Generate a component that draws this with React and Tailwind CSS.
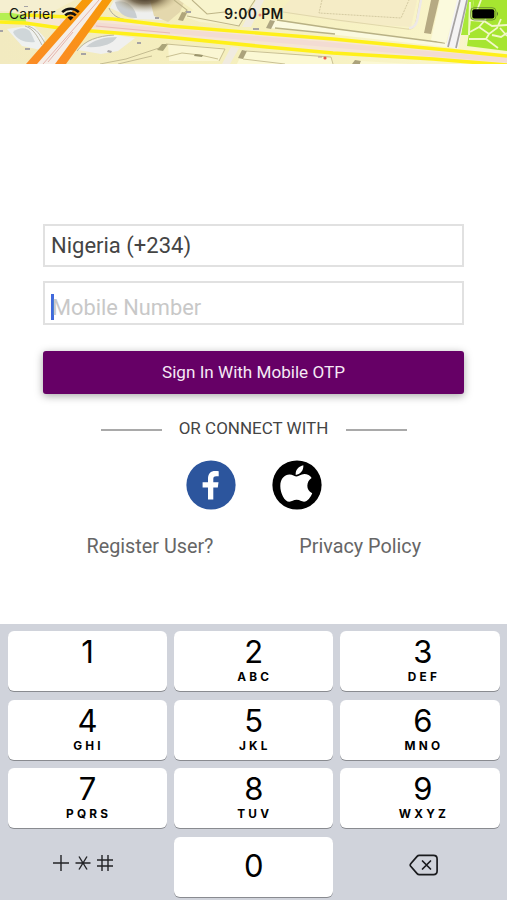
import React from "react";

const keys = [
  { num: "1", letters: "" },
  { num: "2", letters: "ABC" },
  { num: "3", letters: "DEF" },
  { num: "4", letters: "GHI" },
  { num: "5", letters: "JKL" },
  { num: "6", letters: "MNO" },
  { num: "7", letters: "PQRS" },
  { num: "8", letters: "TUV" },
  { num: "9", letters: "WXYZ" },
];

function MapBackground() {
  return (
    <svg className="absolute inset-0" width="507" height="64" viewBox="0 0 507 64" fill="none">
      <defs>
        <linearGradient id="land" x1="0" x2="1" y1="0" y2="0">
          <stop offset="0" stopColor="#f2eac0" />
          <stop offset="0.45" stopColor="#f5efbd" />
          <stop offset="1" stopColor="#faf6cd" />
        </linearGradient>
        <linearGradient id="orange" x1="0" x2="0" y1="0" y2="1">
          <stop offset="0" stopColor="#f79a08" />
          <stop offset="1" stopColor="#fb8c24" />
        </linearGradient>
        <radialGradient id="shade" cx="145" cy="-4" r="34" gradientUnits="userSpaceOnUse" gradientTransform="matrix(1 0 0 .5 0 -2)">
          <stop offset="0" stopColor="#2b1d10" />
          <stop offset="0.45" stopColor="#5d4c30" stopOpacity="0.8" />
          <stop offset="1" stopColor="#c2b384" stopOpacity="0" />
        </radialGradient>
      </defs>
      <rect width="507" height="64" fill="url(#land)" />

      {/* bloques */}
      <path d="M0 0h75L50 13 0 11z" fill="#f5efd0" />
      <path d="M0 13h12l18 3-4 6-26-2z" fill="#b5ef52" />
      <path d="M7 29l26-4 12 13-4 12-19-4z" fill="#eff1f0" />
      <path d="M13 32c6-5 15-5 18 1l4 9c-8 1-18-1-22-10z" fill="#cfd6d9" />
      <path d="M25 26c9 3 12 10 17 19M28 26c9 3 12 9 17 17" stroke="#b9b6a4" />
      <path d="M110 8l4-8h50v20l-29-1z" fill="#eeefee" />
      <path d="M115 2c8-3 20 2 22 16-11 1-20-5-22-16z" fill="#c9ced1" />
      <path d="M109 8c3 7 9 11 19 12" stroke="#aaa99b" />
      <path d="M78 50c8-10 23-14 38-15l19 3-17 13-17 3z" fill="#f0f0ef" />
      <path d="M86 47c7-7 18-10 31-10-4 7-15 11-31 10z" fill="#cbd0d2" />
      <path d="M77 51c8-11 21-15 37-16" stroke="#b8b5a1" />
      <path d="M100 64l26-5 36-12M118 64l34-8" stroke="#c4bc91" />
      <path d="M157 50l5-6h6l-5 7z" fill="#aba579" />
      <path d="M150 0h35l-5 12-12 10-14-6z" fill="#e4d8ad" />
      <path d="M110 0h70v14h-70z" fill="url(#shade)" />
      <path d="M185 17l8-7-14-10h76l-6 14-9 12-40-4z" fill="#f8f4cd" />
      <path d="M174 0l13 10-7 8M187 16l52 10 12-20 4-6M192 0l15 14 18-2" stroke="#bdb487" strokeWidth="1.1" />
      <path d="M178 20l4-8 5 1-4 8z" fill="#b0a57b" />
      <path d="M256 0h8l-13 27h-9z" fill="#f0ebe0" />
      <path d="M271 20l71 9 105 14v4l-100-11-77-8z" fill="#fbfae0" />
      <path d="M266 28l4-8 5 1-4 8z" fill="#aea682" />
      <path d="M275 28l60 6M277 20l60 9 108 14" stroke="#b8b184" strokeWidth="1.3" />
      <path d="M290 0h127l-6 27-60-4-72-11z" fill="#f5ecc6" />
      <path d="M283 12l54 8 70 9q7 1 9-7l4-22" stroke="#e0d7aa" strokeWidth="1.2" />
      <path d="M322 0l-3 13 82 5 8-18" stroke="#d4caa1" strokeDasharray="2 1" />
      <path d="M409 28q6 0 8-7l4-21" stroke="#eee9e8" strokeWidth="2.5" />
      <path d="M440 0h18l-12 43-15-3z" fill="#fbfadd" />
      <path d="M431 0h8l-8 34-7-1z" fill="#b6aa83" />
      <path d="M465 0h42v52l-43-5z" fill="#f6f6c8" />
      <path d="M474 0h33v51l-40-5z" fill="#a6e530" />
      <path d="M466 0l-5 35h7l6-35z" fill="#a9e83a" />
      <path d="M470 2l-1 33" stroke="#eff8c4" strokeWidth="2" />
      <path d="M470 20l14 1 8 5 15-1M470 32l9-5 7-8M479 27l10 7 8-6 4-9M489 34l-3 5 12 9M486 39l-17 0M500 28l7 8M492 35l9 2 6-4M474 18l7-18" stroke="#f2f8c8" strokeWidth="1.8" />
      <path d="M457 0h11l-10 49-12-3z" fill="#f4f3f4" />
      <path d="M460 0l-12 47M467 0l-11 48" stroke="#a5a2a2" strokeWidth="1.7" />
      <path d="M168 44l57 4-6 13-50 0z" fill="#faf6d3" />
      <path d="M166 57l16-4 18 2 18 4M219 61l6-12-59-5" stroke="#c9c092" />
      <path d="M195 54l8 1-1 2-8-1z" fill="#9b956d" />
      <path d="M243 50l88 8 2 6H237z" fill="#fbf8d4" />
      <path d="M238 58l4-8 5 1-4 8z" fill="#aba27b" />
      <path d="M246 51l85 6 2 7M243 59l42 5" stroke="#c9c094" />
      <path d="M231 47l-9 17h8l9-16z" fill="#f0ebe0" />
      <path d="M352 64l3-4 6 1-1 3z" fill="#aba27b" />
      <path d="M361 61l50 3h-51z" fill="#fbf8d4" />

      {/* avenida amarilla */}
      <path d="M25 15l88 4 57 7 163 12 114 11 60 6v9h-12l-62-6-100-6-166-16-80-6-61-8z" fill="#f6e6d3" />
      <path d="M60 22l110 9 163 14 100 9 74 6" stroke="#f3dcd3" strokeWidth="5" />
      <path d="M96 26l74 7" stroke="#e9bab5" strokeWidth="1" />
      <path d="M24 15l23 1 66 3 57 7 163 13 114 11 60 6" stroke="#fff01a" strokeWidth="3.4" />
      <path d="M0 22l25 1 42 6 100 8 100 10 66 6 100 6 74 6" stroke="#fff01a" strokeWidth="3.6" />

      {/* autopista */}
      <path d="M92 0h12L60 64H34z" fill="#f5eee8" />
      <path d="M99 0L43 64M73 32L48 62" stroke="#e6b4ad" strokeWidth="1" />
      <path d="M82 0h11L37 64H26z" fill="url(#orange)" />
      <path d="M102 0h10L66 64H55z" fill="url(#orange)" />

      <g fill="#a6a3a5">
        <path d="M25 48h5v2h-5zM81 53h5v2h-5zM108 50l4 1-1 2-4-1zM137 42h4v2h-4zM155 17h4v2h-4zM253 28h6v2h-6zM186 11h5v2h-5zM24 6h4v1h-4zM0 30h3v2H0z" />
      </g>
      <circle cx="325" cy="58" r="1.6" fill="#ec5548" />
      <path d="M318 57h4" stroke="#b49a99" />
      <circle cx="260" cy="15" r="1.5" fill="#f48d88" />
    </svg>
  );
}

function StatusBar() {
  return (
    <div className="relative grid h-[27px] grid-cols-3 items-center pl-[9px] pr-[8px] font-['Inter',sans-serif] text-[13.8px] text-[#171713]">
      <div className="flex items-center gap-[5px] pt-px">
        <span className="tracking-[0.2px]">Carrier</span>
        <svg width="19" height="14" viewBox="0 0 19 14" fill="none" stroke="#111" strokeWidth="2.6">
          <path d="M1.2 5.1a11.8 11.8 0 0 1 16.6 0" />
          <path d="M4.2 8.3a7.5 7.5 0 0 1 10.6 0" />
          <path d="M9.5 13.6L6.5 10.6a4.3 4.3 0 0 1 6 0z" fill="#111" stroke="none" />
        </svg>
      </div>
      <span className="pt-px text-center font-semibold tracking-[0.4px]">9:00 PM</span>
      <svg className="justify-self-end" width="29" height="14" viewBox="0 0 29 14">
        <rect x="0.7" y="0.7" width="25.2" height="12.3" rx="3.6" fill="none" stroke="#57712f" strokeOpacity="0.7" />
        <rect x="2.3" y="2.3" width="22" height="9.2" rx="2" fill="#000" />
        <path d="M27 4.8q2 2 0 4.2z" fill="#57712f" />
      </svg>
    </div>
  );
}

export default function App() {
  return (
    <div className="flex h-[900px] w-[507px] flex-col overflow-hidden bg-white font-['Roboto',sans-serif]">
      <header className="relative h-16 shrink-0 overflow-hidden">
        <MapBackground />
        <StatusBar />
      </header>

      <main className="flex h-[560px] shrink-0 flex-col px-[43px] pt-40">
        <div className="flex h-[43px] items-center border-2 border-[#e1e1e1] pl-[6px] text-[22px] text-[#444]">
          <span>Nigeria (+234)</span>
        </div>
        <div className="mt-[14px] flex h-[44px] items-center border-2 border-[#e1e1e1] pl-[6px] pt-[8px] text-[21.8px] text-[#c8c8c8]">
          <span className="h-[26px] w-[2.5px] bg-[#4169dc]"></span>
          <span className="-ml-[1.5px] pt-[2px]">Mobile Number</span>
        </div>
        <button className="mt-[26px] h-[43px] w-[421px] shrink-0 rounded-[3px] bg-[#660066] text-[17.1px] text-[#f5e9f5] shadow-[0_2px_8px_rgba(0,0,0,0.35)]">
          Sign In With Mobile OTP
        </button>

        <div className="mt-[22px] flex h-6 items-center justify-center">
          <span className="mt-[3px] h-[2px] w-[61px] bg-[#a9a9a9]"></span>
          <span className="w-[184px] pt-[2px] text-center text-[17px] text-[#444]">OR CONNECT WITH</span>
          <span className="mt-[3px] h-[2px] w-[61px] bg-[#a9a9a9]"></span>
        </div>

        <div className="mt-[20px] flex justify-center gap-[36px]">
          <svg width="50" height="50" viewBox="0 0 50 50">
            <circle cx="25" cy="25" r="24.6" fill="#2c559d" />
            <path d="M22 39.6V27.6h-5.4v-5.4H22v-3.4c0-5.2 2.7-7.8 7.2-7.8 1.5 0 2.6.1 3.5.3v4.9h-2.5c-2.2 0-2.9 1.1-2.9 2.7v3.3h5.2l-.7 5.4h-4.5v12z" fill="#fff" />
          </svg>
          <svg width="50" height="50" viewBox="0 0 50 50">
            <circle cx="25" cy="25" r="24.6" fill="#000" />
            <path d="M23.7 14.9c-.6-5 3.4-8.7 7.6-9.6.6 5-3.2 9.3-7.6 9.6z" fill="#fff" />
            <path d="M24.7 16.5c2.2 0 4-2.4 7.6-2.4 3 0 5.9 1.5 7.3 4-5.4 3.2-6.1 12.2 .6 15.1-1.4 3.8-4.8 8.5-8.2 8.5-2.8 0-3.9-1.9-7.3-1.9s-4.7 1.9-7.3 1.9c-5 0-9.1-8.7-9.1-15.8 0-7.5 4.5-11.4 9.2-11.4 3 0 5.2 2 7.2 2z" fill="#fff" />
          </svg>
        </div>

        <div className="mt-[23px] flex justify-between pl-[43.5px] pr-[43px] text-[19.8px] leading-7 text-[#666]">
          <a href="#">Register User?</a>
          <a href="#">Privacy Policy</a>
        </div>
      </main>

      <section className="grid h-[276px] shrink-0 grid-cols-3 content-start gap-x-[7px] gap-y-[8.6px] bg-[#d0d3db] pl-[8px] pr-[7.5px] pt-[7px] font-['Inter',sans-serif] text-black">
        {keys.map((key) => (
          <button
            key={key.num}
            className="flex h-[60px] flex-col items-center rounded-[6px] bg-white pt-[5px] shadow-[0_1px_0_#898b90] nth-[3n]:pl-[6px]"
          >
            <span className="text-[31px] leading-8 font-normal">{key.num}</span>
            <span className="pl-[2px] text-[11.8px] leading-[19px] font-bold tracking-[3.2px]">
              {key.letters}
            </span>
          </button>
        ))}
        <button className="flex h-[60px] items-center justify-center pb-[7px] pr-[9px]">
          <svg width="62" height="20" viewBox="0 0 62 20" fill="none" stroke="#222326" strokeWidth="1.4">
            <path d="M1 10h16M9 2v16" />
            <path d="M23.5 10h15M27 3.5l8 13M35 3.5l-8 13" />
            <path d="M45 7h16M45 13h16M50 2v16M56 2v16" />
          </svg>
        </button>
        <button className="flex h-[60px] items-center justify-center rounded-[6px] bg-white pb-[2px] text-[31px] font-normal shadow-[0_1px_0_#898b90]">
          0
        </button>
        <button className="flex h-[60px] items-center justify-center pb-[3px] pl-[8px]">
          <svg width="30" height="24" viewBox="0 0 30 24" fill="none" stroke="#191a1d" strokeWidth="1.7" strokeLinejoin="round" strokeLinecap="round">
            <path d="M10.3 2.4h14.2q3.6 0 3.6 3.6v12q0 3.6-3.6 3.6H10.3q-1.3 0-2.2-1L1.7 13.3q-1-1.3 0-2.6L8.1 3.4q.9-1 2.2-1z" />
            <path d="M13.5 8l8 8M21.5 8l-8 8" />
          </svg>
        </button>
      </section>
    </div>
  );
}
